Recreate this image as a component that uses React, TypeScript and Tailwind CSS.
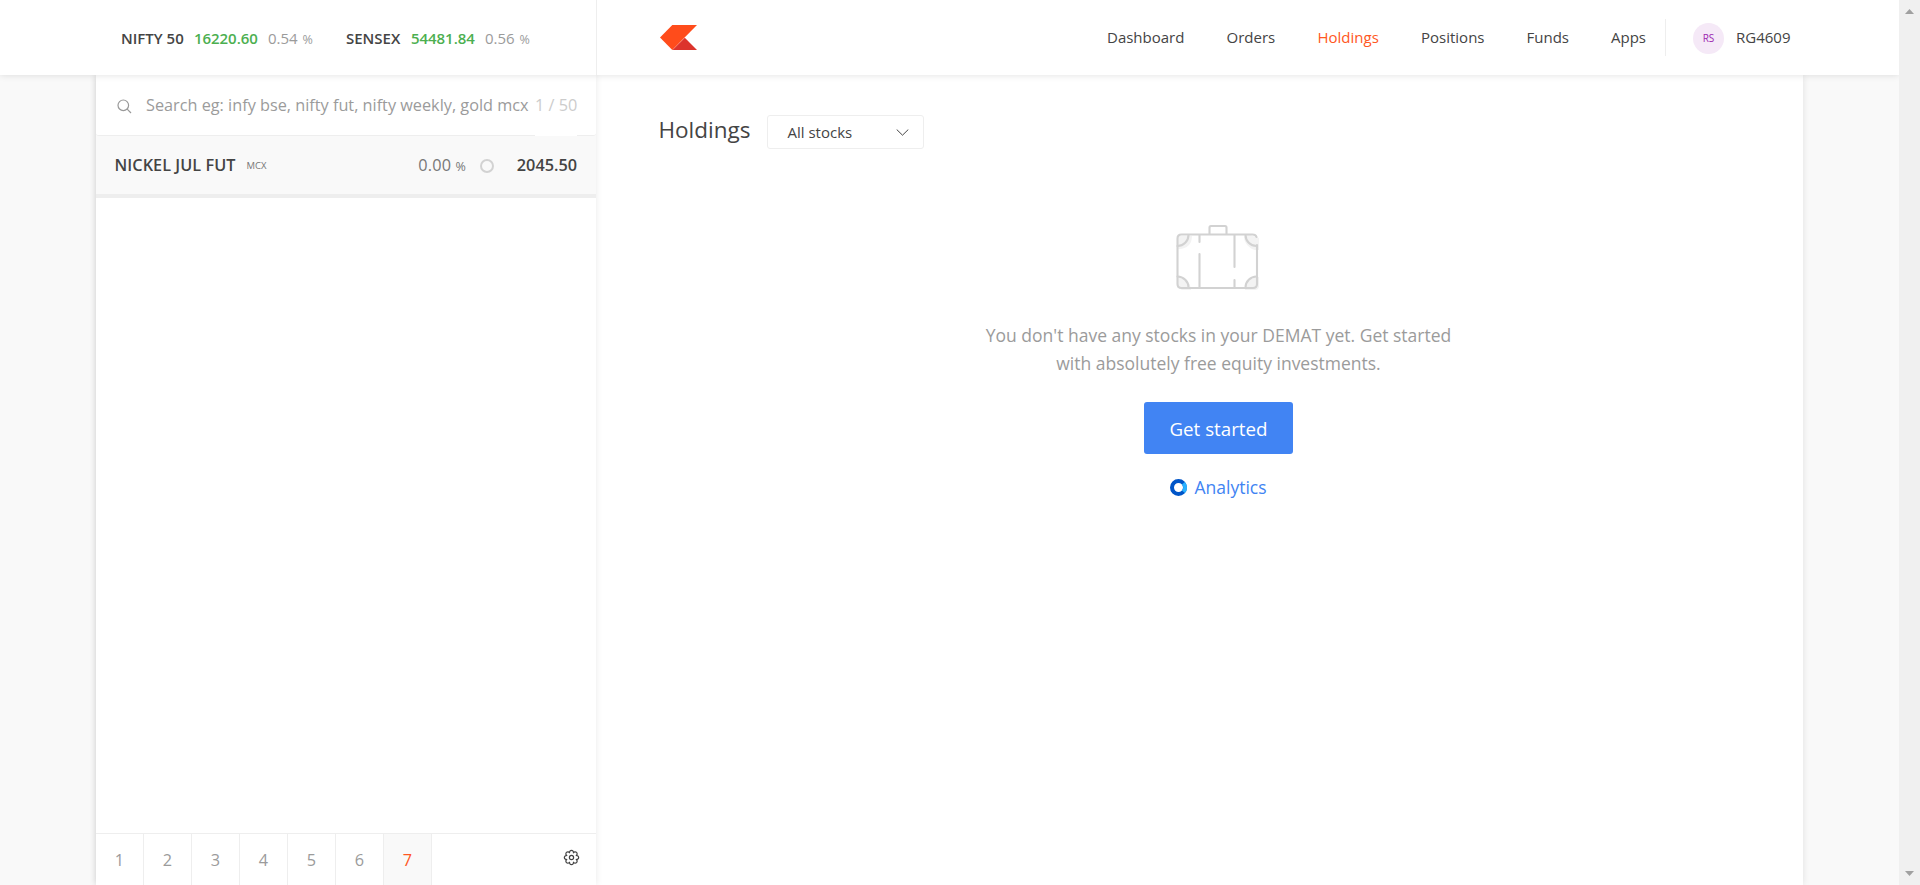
import React from "react";

const INDICES = [
  { name: "NIFTY 50", price: "16220.60", change: "0.54", nameWidth: "w-[73px]", width: "w-[225px]" },
  { name: "SENSEX", price: "54481.84", change: "0.56", nameWidth: "w-[65px]", width: "w-[200px]" },
];

const NAV = [
  { label: "Dashboard", width: "w-[119.500px]" },
  { label: "Orders", width: "w-[91px]" },
  { label: "Holdings", width: "w-[103.500px]", active: true },
  { label: "Positions", width: "w-[105.500px]" },
  { label: "Funds", width: "w-[84.500px]" },
  { label: "Apps", width: "w-[54px]" },
];

const PAGES = [1, 2, 3, 4, 5, 6, 7];

function Logo() {
  return (
    <svg className="mt-[25px] h-[25px] w-[37px] shrink-0" viewBox="0 0 37 25">
      <path d="M12.3 0H37L12.3 25L0 12.5Z" fill="#ff4c1b" />
      <path d="M24.8 12.7L37 25H12.5Z" fill="#dc342d" />
    </svg>
  );
}

function Suitcase() {
  return (
    <svg className="h-[70px] w-[90px]" viewBox="0 0 90 70" fill="none">
      <g fill="#f3f3f3">
        <path d="M5 16h15c0 8-5 13-13 13H5z" />
        <path d="M75 14l12 4v12h-4c-5-1-11-7-11-13z" />
        <path d="M5 56c7 0 14 7 14 14H10l-5-3z" />
        <path d="M73 70c0-8 6-13 14-13v9c0 3-2 4-5 4z" />
      </g>
      <g stroke="#d2d2d2" strokeWidth="2.100" strokeLinecap="round">
        <path d="M84.500 17c-.5-1.600-2-2.500-4-2.500H9.500c-2.500 0-4 1.500-4 4V64c0 2.500 1.500 4 4 4h71.500c2.500 0 4-1.500 4-4V25" />
        <path d="M37.500 14V7.500c0-1 .5-1.500 1.500-1.500h14c1 0 1.500.500 1.500 1.500V14" />
        <path d="M27.500 15v7M27.500 34v33M62.500 15v32M62.500 60v7" />
        <path d="M16.500 15c0 6-5 11-11 11M73.500 15c0 6 5 11 11 11M5.500 56.500c6 0 11 5 11 11M84.500 56.500c-6 0-11 5-11 11" />
      </g>
    </svg>
  );
}

function Gear() {
  return (
    <svg className="h-[17px] w-[17px]" viewBox="0 0 17 17" fill="none" stroke="#444" strokeWidth="1.200" strokeLinejoin="round">
      <path d="M13.210 6.550A2 2 0 1 1 13.210 10.450A2 2 0 1 1 10.450 13.210A2 2 0 1 1 6.550 13.210A2 2 0 1 1 3.790 10.450A2 2 0 1 1 3.790 6.550A2 2 0 1 1 6.550 3.790A2 2 0 1 1 10.450 3.790A2 2 0 1 1 13.210 6.550Z" />
      <circle cx="8.500" cy="8.500" r="2.100" />
    </svg>
  );
}

function Header() {
  return (
    <header className="relative z-10 flex h-[75px] shrink-0 bg-white shadow-[0_0_7px_rgba(0,0,0,0.13)]">
      <div className="flex w-[597px] shrink-0 border-r border-[#eee] pt-[27px] pl-[121px] text-[15px] leading-[22px]">
        {INDICES.map((i) => (
          <div key={i.name} className={`flex shrink-0 whitespace-nowrap ${i.width}`}>
            <span className={`shrink-0 font-semibold ${i.nameWidth}`}>{i.name}</span>
            <span className="w-[74px] shrink-0 font-semibold tracking-[-0.05px] text-[#4caf50]">{i.price}</span>
            <span className="text-[#9b9b9b]">
              {i.change} <span className="ml-px text-[12.500px]">%</span>
            </span>
          </div>
        ))}
      </div>
      <div className="w-[63px] shrink-0" />
      <Logo />
      <nav className="ml-[410px] flex shrink-0 pt-[26px] text-[15px] leading-[22px]">
        {NAV.map((n) => (
          <a key={n.label} className={`shrink-0 ${n.width} ${n.active ? "text-[#ff5722]" : ""}`}>
            {n.label}
          </a>
        ))}
      </nav>
      <div className="mt-[19px] flex h-[37px] shrink-0 items-center border-l border-[#eee] pl-[27px]">
        <div className="mt-px flex h-[31px] w-[31px] items-center justify-center rounded-full bg-[#f5e9f7] pt-px text-[10px] text-[#9c27b0]">
          RS
        </div>
        <span className="-mt-px ml-[12px] text-[15px] leading-[22px]">RG4609</span>
      </div>
    </header>
  );
}

function Watchlist() {
  return (
    <aside className="flex w-[500px] shrink-0 flex-col bg-white shadow-[0_0_7px_rgba(0,0,0,0.09)]">
      <div className="bg-[#f9f9f9]">
        <div className="relative flex h-[61px] items-center rounded-b-[3px] border-b border-[#eee] bg-white pl-[21px]">
          <svg className="mt-[3px] h-[15px] w-[15px] shrink-0" viewBox="0 0 15 15" fill="none" stroke="#999" strokeWidth="1.200">
            <circle cx="6.300" cy="6.300" r="5.300" />
            <path d="M10.200 10.200 14 14" />
          </svg>
          <span className="ml-[14px] w-[389px] shrink-0 whitespace-nowrap text-[16.250px] text-[#9b9b9b]">
            Search eg: infy bse, nifty fut, nifty weekly, gold mcx
          </span>
          <span className="whitespace-nowrap text-[16.250px] text-[#ccc]">1 / 50</span>
          <span className="absolute right-[19px] -bottom-px h-px w-[42px] bg-white" />
        </div>
      </div>
      <div className="flex h-[62px] shrink-0 items-center border-b-4 border-[#eee] bg-[#f9f9f9] pr-[19px] pl-[18.500px] text-[16.250px]">
        <span className="font-semibold tracking-[0.05px]">NICKEL JUL FUT</span>
        <span className="mt-[2px] ml-[11px] text-[9.500px] text-[#777]">MCX</span>
        <span className="ml-auto text-[#777]">
          <span className="tracking-[0.2px]">0.00</span> <span className="text-[12.500px]">%</span>
        </span>
        <span className="mt-px ml-[14px] h-[14px] w-[14px] rounded-full border-2 border-[#d2d2d2]" />
        <span className="ml-[23px] font-semibold">2045.50</span>
      </div>
      <div className="grow" />
      <div className="flex h-[52px] shrink-0 border-t border-[#eee] text-[16.250px]">
        {PAGES.map((p) => (
          <span
            key={p}
            className={`flex w-[48px] shrink-0 justify-center border-r border-[#eee] pt-[14px] leading-6 ${
              p === 7 ? "bg-[#f9f9f9] text-[#ff5722]" : "text-[#9b9b9b]"
            }`}
          >
            {p}
          </span>
        ))}
        <div className="mt-[15px] mr-[16px] ml-auto">
          <Gear />
        </div>
      </div>
    </aside>
  );
}

function Holdings() {
  return (
    <main className="grow">
      <div className="flex h-[151px] pt-[40px] pl-[62.500px]">
        <h1 className="mt-px w-[108.500px] shrink-0 text-[22.500px] leading-[28px]">Holdings</h1>
        <div className="flex h-[34px] w-[157px] items-center justify-between rounded-[3px] border border-[#eee] pr-[14px] pl-[19.500px] text-[15px]">
          All stocks
          <svg className="h-[7px] w-[13px]" viewBox="0 0 13 7" fill="none" stroke="#444">
            <path d="M.7.5 6.500 6.200 12.300.5" />
          </svg>
        </div>
      </div>
      <section className="flex flex-col items-center pl-[38px]">
        <div className="-mt-[6px] mr-[4px] h-[101px]">
          <Suitcase />
        </div>
        <p className="w-[500px] text-center text-[17.500px] leading-[28px] text-[#9b9b9b]">
          You don't have any stocks in your DEMAT yet. Get started
          <br />
          with absolutely free equity investments.
        </p>
        <button className="mt-[25px] h-[52px] w-[149px] rounded-[3px] bg-[#4184f3] pt-[2px] text-[18.750px] text-white">
          Get started
        </button>
        <a className="mt-[19px] flex items-center gap-[7px] text-[17.500px] leading-[28px] text-[#4184f3]">
          <svg className="h-[17px] w-[17px]" viewBox="0 0 17 17" fill="none" strokeWidth="4">
            <circle cx="8.500" cy="8.500" r="6.500" stroke="#0055c8" />
            <path d="M13.400 4.200A6.500 6.500 0 0 1 13.400 12.800" stroke="#29b1ff" />
          </svg>
          Analytics
        </a>
      </section>
    </main>
  );
}

function Scrollbar() {
  return (
    <div className="flex w-[21px] shrink-0 flex-col items-center justify-between bg-[#f0f0f0] py-[9px]">
      <svg className="h-[5px] w-[9px]" viewBox="0 0 9 5" fill="#a0a0a0">
        <path d="M4.500 0 9 5H0Z" />
      </svg>
      <svg className="h-[5px] w-[9px]" viewBox="0 0 9 5" fill="#a0a0a0">
        <path d="M0 0H9L4.500 5Z" />
      </svg>
    </div>
  );
}

export default function App() {
  return (
    <div className="flex h-[885px] w-[1920px] overflow-hidden bg-[#f9f9f9] font-['Open_Sans',sans-serif] text-[#444]">
      <div className="flex w-[1899px] shrink-0 flex-col overflow-hidden">
        <Header />
        <div className="ml-[96px] flex w-[1707px] grow bg-white shadow-[0_0_7px_rgba(0,0,0,0.1)]">
          <Watchlist />
          <Holdings />
        </div>
      </div>
      <Scrollbar />
    </div>
  );
}
